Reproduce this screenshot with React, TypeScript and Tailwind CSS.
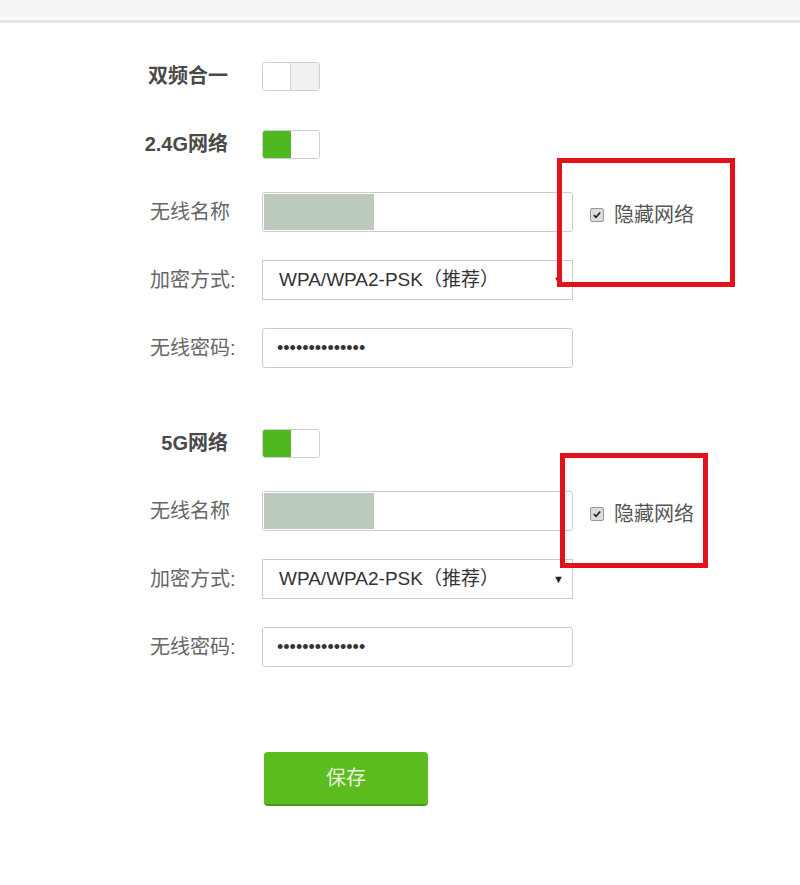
import type { ReactNode } from "react";

const FONT = "font-['Liberation_Sans','Noto_Sans_CJK_SC',sans-serif]";

function Toggle({ on }: { on: boolean }) {
  return (
    <div className="flex h-[29px] w-[58px] overflow-hidden rounded-[3px] border border-[#cfcfcf] bg-white">
      <div className={on ? "w-1/2 bg-[#4fb81e]" : "w-1/2 border-r border-[#d4d4d4] bg-white"} />
      <div className={on ? "w-1/2 bg-white" : "w-1/2 bg-[#f1f1f1]"} />
    </div>
  );
}

function Row({ label, bold, children }: { label: string; bold?: boolean; children: ReactNode }) {
  return (
    <div className="flex h-[68px] items-center">
      <div
        className={
          bold
            ? "flex w-[228px] justify-end text-[20px] font-bold text-[#4a4a4a]"
            : "w-[228px] pl-[150px] text-[20px] whitespace-nowrap text-[#666]"
        }
      >
        {label}
      </div>
      <div className="ml-[34px] flex items-center">{children}</div>
    </div>
  );
}

function NameInput() {
  return (
    <div className="flex h-[40px] w-[311px] items-stretch rounded-[3px] border border-[#cccccc] bg-white p-[1px]">
      <div className="w-[110px] bg-[#bccabb]" />
    </div>
  );
}

function SelectBox() {
  return (
    <div className="relative flex h-[40px] w-[311px] items-center border border-[#cccccc] bg-white pl-[16px] text-[19px] text-[#333]">
      WPA/WPA2-PSK（推荐）
      <span className="absolute right-[8px] top-[11px] text-[11px] text-[#222]">▼</span>
    </div>
  );
}

function PasswordInput() {
  return (
    <div className="flex h-[40px] w-[311px] items-center rounded-[3px] border border-[#cccccc] bg-white pl-[14px] text-[18px] leading-none text-[#333]">
      ••••••••••••••
    </div>
  );
}

function HideNetwork() {
  return (
    <div className="ml-[17px] mt-[5px] flex items-center gap-[10px] text-[20px] text-[#555]">
      <span className="flex h-[14px] w-[14px] items-center justify-center rounded-[2px] border border-[#999] bg-[#dcdcdc]">
        <svg viewBox="0 0 12 12" className="h-[10px] w-[10px]">
          <path d="M2.2 6.2 L4.8 8.8 L9.8 3" fill="none" stroke="#222" strokeWidth="2" />
        </svg>
      </span>
      隐藏网络
    </div>
  );
}

export default function App() {
  return (
    <div className={`relative min-h-[885px] w-[800px] bg-white ${FONT}`}>
      {/* top bar */}
      <div className="h-[17px] bg-[#f5f5f5]" />
      <div className="h-[3px] bg-[#fafafa]" />
      <div className="h-[3px] bg-[#e4e4e4]" />

      <main className="pt-[19px]">
        <Row label="双频合一" bold>
          <Toggle on={false} />
        </Row>
        <Row label="2.4G网络" bold>
          <Toggle on />
        </Row>
        <Row label="无线名称">
          <NameInput />
          <HideNetwork />
        </Row>
        <Row label="加密方式:">
          <SelectBox />
        </Row>
        <Row label="无线密码:">
          <PasswordInput />
        </Row>

        <div className="h-[27px]" />

        <Row label="5G网络" bold>
          <Toggle on />
        </Row>
        <Row label="无线名称">
          <NameInput />
          <HideNetwork />
        </Row>
        <Row label="加密方式:">
          <SelectBox />
        </Row>
        <Row label="无线密码:">
          <PasswordInput />
        </Row>

        <div className="ml-[264px] mt-[71px]">
          <button
            type="button"
            className="flex h-[54px] w-[164px] items-center justify-center rounded-[4px] border-b-2 border-[#479a17] bg-[#5bbb1f] text-[20px] text-[#e8f7dc]"
          >
            保存
          </button>
        </div>
      </main>

      {/* red annotation boxes */}
      <div className="absolute left-[557px] top-[158px] h-[129px] w-[178px] border-[5px] border-[#e3111b]" />
      <div className="absolute left-[560px] top-[453px] h-[115px] w-[148px] border-[5px] border-[#e3111b]" />
    </div>
  );
}
